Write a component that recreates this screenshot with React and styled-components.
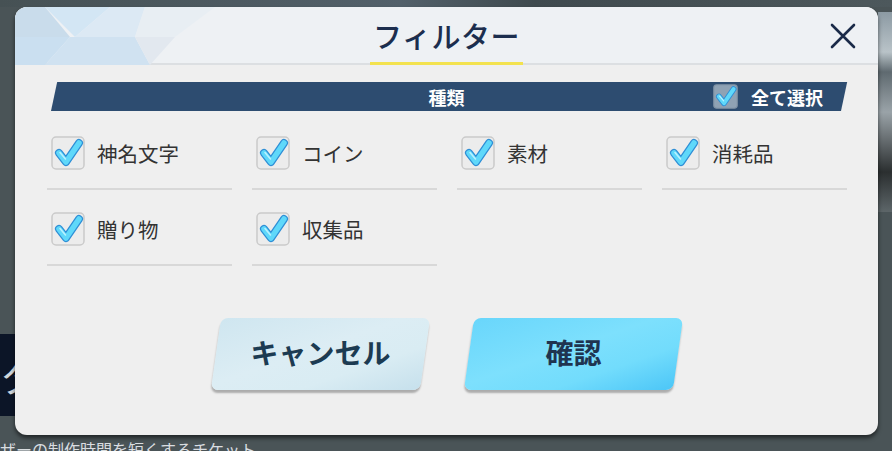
import styled, { createGlobalStyle } from "styled-components";

const GlobalStyle = createGlobalStyle`
  html, body {
    margin: 0;
    padding: 0;
    background: #4a5457;
  }
  * {
    box-sizing: border-box;
  }
`;

const Page = styled.div`
  position: relative;
  width: 892px;
  height: 451px;
  overflow: hidden;
  background: #4a5457;
  font-family: "Noto Sans CJK JP", "Noto Sans", sans-serif;
`;

const BackdropTop = styled.div`
  height: 7px;
  background: linear-gradient(90deg, #465154 0%, #52606a 45%, #3f4a4e 60%, #4d585c 100%);
`;

const BackdropBand = styled.div`
  position: absolute;
  left: 0;
  top: 334px;
  width: 20px;
  height: 82px;
  background: #0c1527;
  color: #cfd6dc;
  font-size: 40px;
  line-height: 82px;
`;

const BackdropRight = styled.div`
  position: absolute;
  right: 0;
  top: 12px;
  width: 14px;
  height: 200px;
  background: linear-gradient(180deg, #8c9aa3 0%, #b9c3c8 20%, #5f6a70 30%, #9aa3a8 50%, #2b2f30 80%, #5d6669 100%);
`;

const BackdropText = styled.div`
  position: absolute;
  left: 0;
  top: 438px;
  color: #d9dde0;
  font-size: 16px;
  line-height: 22px;
  white-space: nowrap;
`;

const Modal = styled.div`
  position: absolute;
  left: 15px;
  top: 7px;
  width: 863px;
  height: 428px;
  border-radius: 12px;
  background: #efefef;
  box-shadow: 0 3px 4px rgba(0, 0, 0, 0.55);
  overflow: hidden;
  display: flex;
  flex-direction: column;
`;

const Header = styled.div`
  position: relative;
  height: 58px;
  flex-shrink: 0;
  background: #eef1f4;
  border-bottom: 2px solid #dcdfe2;
  display: flex;
  align-items: center;
  justify-content: center;
`;

const HeaderPattern = styled.svg`
  position: absolute;
  left: 0;
  top: 0;
`;

const Title = styled.div`
  position: relative;
  font-size: 29px;
  font-weight: 500;
  color: #1c2e4e;
  letter-spacing: 0.5px;
  padding: 0 3px 6px;
  margin-top: 6px;
  &::after {
    content: "";
    position: absolute;
    left: 0;
    right: 0;
    bottom: -3px;
    height: 3px;
    background: #f3e24e;
  }
`;

const CloseButton = styled.div`
  position: absolute;
  right: 20px;
  top: 14px;
  width: 30px;
  height: 30px;
  display: flex;
  align-items: center;
  justify-content: center;
`;

const Body = styled.div`
  padding: 17px 33px 0 32px;
  display: flex;
  flex-direction: column;
`;

const CategoryBar = styled.div`
  position: relative;
  height: 29px;
  margin-left: 1px;
  width: 797px;
  display: flex;
  align-items: center;
  justify-content: center;
  color: #ffffff;
  font-size: 18px;
  font-weight: 700;
  &::before {
    content: "";
    position: absolute;
    inset: 0;
    background: #2d4c70;
    transform: skewX(-12deg);
    transform-origin: bottom left;
    left: 3px;
    right: 4px;
  }
`;

const BarLabel = styled.span`
  position: relative;
`;

const SelectAll = styled.div`
  position: absolute;
  right: 22px;
  top: 0;
  height: 29px;
  display: flex;
  align-items: center;
  gap: 13px;
  font-size: 18px;
  font-weight: 700;
`;

const Grid = styled.div`
  margin-top: 3px;
  display: grid;
  grid-template-columns: repeat(4, 185px);
  column-gap: 20px;
`;

const Cell = styled.div`
  height: 76px;
  padding: 22px 0 0 4px;
  border-bottom: 2px solid #d8d8d8;
  display: flex;
  align-items: flex-start;
  gap: 12px;
`;

const Label = styled.span`
  font-size: 20.5px;
  color: #333333;
  line-height: 34px;
`;

const ButtonRow = styled.div`
  margin-top: 52px;
  display: flex;
  justify-content: center;
  gap: 44px;
  padding-left: 2px;
`;

const Button = styled.div`
  position: relative;
  width: 209px;
  height: 72px;
  display: flex;
  align-items: center;
  justify-content: center;
  padding-bottom: 4px;
  font-size: 28px;
  font-weight: 700;
  color: ${(p) => (p.$primary ? "#1f3450" : "#1c3b52")};
  &::before {
    content: "";
    position: absolute;
    inset: 0;
    border-radius: 7px;
    transform: skewX(-8deg);
    background: ${(p) =>
      p.$primary
        ? "linear-gradient(160deg, #69d6fb 0%, #7de0fd 45%, #72dcfc 70%, #4cc6f7 100%)"
        : "linear-gradient(160deg, #cfe6f0 0%, #dcedf4 45%, #d9ecf3 70%, #c6e0ec 100%)"};
    box-shadow: 0 3px 2px rgba(0, 0, 0, 0.28);
  }
`;

const ButtonText = styled.span`
  position: relative;
`;

const CheckBox = ({ size = 34, dim }) => (
  <svg width={size} height={size} viewBox="0 0 34 34" style={{ flexShrink: 0 }}>
    <rect
      x="1"
      y="1"
      width="32"
      height="32"
      rx="4"
      fill={dim ? "#8fa2b4" : "#ececec"}
      stroke={dim ? "#7d90a3" : "#cacaca"}
      strokeWidth="1.5"
    />
    <path
      d="M8 17 L15 26 L28 7"
      fill="none"
      stroke="#2f8fd6"
      strokeWidth="8"
      strokeLinecap="round"
      strokeLinejoin="round"
    />
    <path
      d="M8 17 L15 26 L28 7"
      fill="none"
      stroke="#5fd8fa"
      strokeWidth="5.5"
      strokeLinecap="round"
      strokeLinejoin="round"
    />
    <path
      d="M9 16.5 L14.5 23"
      fill="none"
      stroke="#b8f1ff"
      strokeWidth="1.6"
      strokeLinecap="round"
    />
  </svg>
);

const items = ["神名文字", "コイン", "素材", "消耗品", "贈り物", "収集品"];

const App = () => {
  return (
    <Page>
      <GlobalStyle />
      <BackdropTop />
      <BackdropBand>タ</BackdropBand>
      <BackdropRight />
      <BackdropText>ザーの制作時間を短くするチケット</BackdropText>
      <Modal>
        <Header>
          <HeaderPattern width="200" height="58" viewBox="0 0 200 58">
            <polygon points="0,0 30,0 55,30 0,30" fill="#c9dceb" />
            <polygon points="30,0 95,0 60,30" fill="#d3e6f4" />
            <polygon points="0,30 55,30 30,58 0,58" fill="#cadff0" />
            <polygon points="55,30 120,30 135,58 30,58" fill="#d0e2f1" />
            <polygon points="95,0 130,0 120,30 60,30" fill="#dce9f4" />
            <polygon points="120,30 160,30 135,58" fill="#e2e8ef" />
            <polygon points="130,0 200,0 160,30 120,30" fill="#e8eef3" />
          </HeaderPattern>
          <Title>フィルター</Title>
          <CloseButton>
            <svg width="28" height="28" viewBox="0 0 28 28">
              <path
                d="M3 3 L25 25 M25 3 L3 25"
                stroke="#1a2a48"
                strokeWidth="2.6"
                strokeLinecap="round"
              />
            </svg>
          </CloseButton>
        </Header>
        <Body>
          <CategoryBar>
            <BarLabel>種類</BarLabel>
            <SelectAll>
              <CheckBox size={25} dim />
              <span>全て選択</span>
            </SelectAll>
          </CategoryBar>
          <Grid>
            {items.map((item) => (
              <Cell key={item}>
                <CheckBox />
                <Label>{item}</Label>
              </Cell>
            ))}
          </Grid>
          <ButtonRow>
            <Button>
              <ButtonText>キャンセル</ButtonText>
            </Button>
            <Button $primary>
              <ButtonText>確認</ButtonText>
            </Button>
          </ButtonRow>
        </Body>
      </Modal>
    </Page>
  );
};

export default App;
